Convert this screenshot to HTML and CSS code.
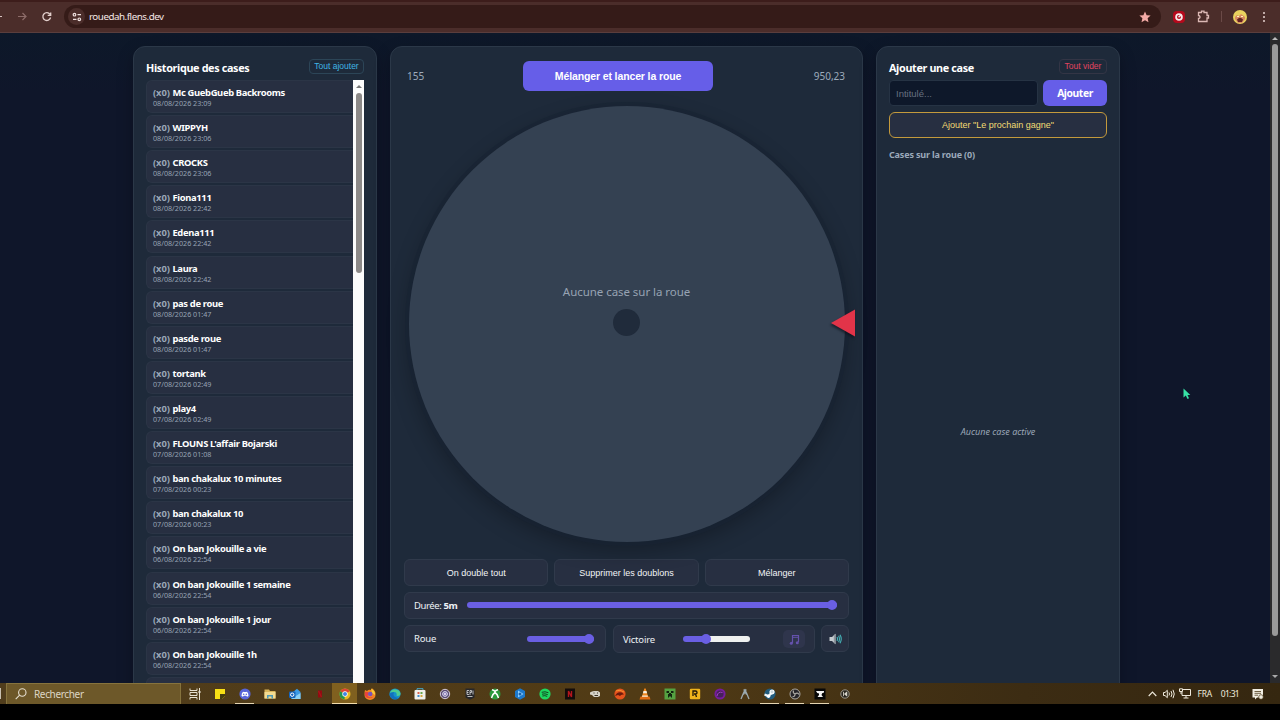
FILE: index.html
```html
<!DOCTYPE html>
<html lang="fr">
<head>
    <meta charset="UTF-8">
    <meta name="viewport" content="width=device-width, initial-scale=1.0">
    <title>Roue</title>
    <link rel="stylesheet" href="styles.css">
</head>
<body>
    <header class="browser-bar">
        <svg class="nav-icons" width="60" height="30" viewBox="0 0 60 30" fill="none" stroke-width="1.2">
            <path d="M-4 14.500H2" stroke="#d9c3c0"/>
            <path d="M18 14.500H26M22.500 11l3.500 3.500-3.500 3.500" stroke="#8d6c69"/>
            <path d="M50 12.300A3.900 3.900 0 1 0 50.600 15.500M50.700 10.500V13.300H47.700" stroke="#e3d0cd" stroke-width="1.300"/>
        </svg>
        <div class="address">
            <span class="site-info">
                <svg width="10" height="10" viewBox="0 0 10 10" fill="none" stroke="#f0e2e0" stroke-width="1.200"><circle cx="2.500" cy="2.700" r="1.300"/><path d="M5.500 2.700H9M1 7.300H4.500"/><circle cx="7.300" cy="7.300" r="1.300"/></svg>
            </span>
            <span class="url">rouedah.flens.dev</span>
            <svg class="star" width="12" height="12" viewBox="0 0 12 12"><path d="M6 .5l1.600 3.700 4 .4-3 2.700.9 4L6 9.200 2.500 11.300l.9-4-3-2.700 4-.4z" fill="#f3aaa6"/></svg>
        </div>
        <div class="browser-tools">
            <svg width="12" height="12" viewBox="0 0 12 12"><rect width="12" height="12" rx="4" fill="#b5091c"/><circle cx="6" cy="6" r="3.800" fill="#f6e9e9"/><circle cx="6" cy="6" r="2" fill="#b5091c"/><path d="M5.500 6.300L8 4" stroke="#f6e9e9" stroke-width="1.500"/></svg>
            <svg width="13" height="13" viewBox="0 0 13 13" fill="none" stroke="#dcb9b5" stroke-width="1.300"><path d="M1.500 2.500H4.500V1.200H7V2.500H10V5.500H11.500V8H10V11.500H1.500V8.500Q3 8.500 3 7T1.500 5.500z"/></svg>
            <span class="tools-divider"></span>
            <svg width="14" height="14" viewBox="0 0 14 14"><circle cx="7" cy="7" r="7" fill="#ead25e"/><path d="M2 7l2-2 2 1 2-2 4 3v2l-3 4H5L2 9z" fill="#d88a62"/><path d="M4 9.500Q7 6 10 9.500L9 12H5z" fill="#612322"/><path d="M4 6.500h2M8 6.500h2" stroke="#fff5bc" stroke-width="1.200"/></svg>
            <svg width="4" height="12" viewBox="0 0 4 12" fill="#e6d3d0"><circle cx="2" cy="2" r="1"/><circle cx="2" cy="6" r="1"/><circle cx="2" cy="10" r="1"/></svg>
        </div>
    </header>

    <div class="viewport">
        <main class="page">
            <section class="panel side history">
                <div class="panel-head">
                    <h2>Historique des cases</h2>
                    <button class="btn-small blue">Tout ajouter</button>
                </div>
                <div class="history-box">
                    <ul class="history-list">
                        <li><p><span>(x0)</span> Mc GuebGueb Backrooms</p><small>08/08/2026 23:09</small></li>
                        <li><p><span>(x0)</span> WIPPYH</p><small>08/08/2026 23:06</small></li>
                        <li><p><span>(x0)</span> CROCKS</p><small>08/08/2026 23:06</small></li>
                        <li><p><span>(x0)</span> Fiona111</p><small>08/08/2026 22:42</small></li>
                        <li><p><span>(x0)</span> Edena111</p><small>08/08/2026 22:42</small></li>
                        <li><p><span>(x0)</span> Laura</p><small>08/08/2026 22:42</small></li>
                        <li><p><span>(x0)</span> pas de roue</p><small>08/08/2026 01:47</small></li>
                        <li><p><span>(x0)</span> pasde roue</p><small>08/08/2026 01:47</small></li>
                        <li><p><span>(x0)</span> tortank</p><small>07/08/2026 02:49</small></li>
                        <li><p><span>(x0)</span> play4</p><small>07/08/2026 02:49</small></li>
                        <li><p><span>(x0)</span> FLOUNS L'affair Bojarski</p><small>07/08/2026 01:08</small></li>
                        <li><p><span>(x0)</span> ban chakalux 10 minutes</p><small>07/08/2026 00:23</small></li>
                        <li><p><span>(x0)</span> ban chakalux 10</p><small>07/08/2026 00:23</small></li>
                        <li><p><span>(x0)</span> On ban Jokouille a vie</p><small>06/08/2026 22:54</small></li>
                        <li><p><span>(x0)</span> On ban Jokouille 1 semaine</p><small>06/08/2026 22:54</small></li>
                        <li><p><span>(x0)</span> On ban Jokouille 1 jour</p><small>06/08/2026 22:54</small></li>
                        <li><p><span>(x0)</span> On ban Jokouille 1h</p><small>06/08/2026 22:54</small></li>
                        <li></li>
                    </ul>
                    <div class="list-scroll">
                        <i class="arrow-up"></i>
                        <i class="thumb"></i>
                    </div>
                </div>
            </section>

            <section class="panel center">
                <div class="wheel-head">
                    <span>155</span>
                    <button class="btn-primary launch">Mélanger et lancer la roue</button>
                    <span class="right">950,23</span>
                </div>
                <div class="wheel">
                    <span class="wheel-text">Aucune case sur la roue</span>
                    <span class="hub"></span>
                    <svg class="pointer" width="24" height="28" viewBox="0 0 24 28"><path d="M0 14L24 .5V27.500z" fill="#e23449"/></svg>
                </div>
                <div class="row actions">
                    <button class="btn-dark">On double tout</button>
                    <button class="btn-dark">Supprimer les doublons</button>
                    <button class="btn-dark">Mélanger</button>
                </div>
                <div class="row">
                    <div class="control duration">
                        <label>Durée: <b>5m</b></label>
                        <span class="slider full"><i></i></span>
                    </div>
                </div>
                <div class="row sounds">
                    <div class="control volume">
                        <label>Roue</label>
                        <span class="slider full"><i></i></span>
                    </div>
                    <div class="control victory">
                        <label>Victoire</label>
                        <span class="slider third"><i></i></span>
                        <span class="music">
                            <svg width="11" height="11" viewBox="0 0 11 11"><path d="M3.500 9V1.500H9.500V8" fill="none" stroke="#6552ad" stroke-width="1.200"/><path d="M3.500 3.300H9.500" stroke="#6552ad"/><circle cx="2.300" cy="9.200" r="1.500" fill="#6552ad"/><circle cx="8.300" cy="8.800" r="1.500" fill="#6552ad"/></svg>
                        </span>
                    </div>
                    <div class="control mute">
                        <svg width="13" height="12" viewBox="0 0 13 12"><path d="M.5 4H3L6.500 .8V11.200L3 8H.5z" fill="#c5cbd0"/><path d="M4.800 2.500L6.500 .8V11.200L4.800 9.600z" fill="#8d959c"/><path d="M8 4Q9 6 8 8M9.600 2.800Q11.300 6 9.600 9.200M11 1.800Q13.500 6 11 10.200" fill="none" stroke="#45b4b9" stroke-width="1.100"/></svg>
                    </div>
                </div>
            </section>

            <section class="panel side add">
                <div class="panel-head">
                    <h2>Ajouter une case</h2>
                    <button class="btn-small red">Tout vider</button>
                </div>
                <div class="add-row">
                    <input type="text" placeholder="Intitulé...">
                    <button class="btn-primary">Ajouter</button>
                </div>
                <button class="btn-gold">Ajouter "Le prochain gagne"</button>
                <h3>Cases sur la roue (0)</h3>
                <p class="empty">Aucune case active</p>
            </section>
        </main>
        <div class="page-scroll">
            <i class="arrow-up"></i>
            <i class="thumb"></i>
            <i class="arrow-down"></i>
        </div>
        <svg class="cursor" width="8" height="12" viewBox="0 0 8 12"><path d="M.5 .5V9.500L2.800 7.500 4.500 11 6 10.300 4.500 7H7.300z" fill="#37e2a5"/></svg>
    </div>

    <footer class="taskbar">
        <span class="start"></span>
        <div class="search">
            <svg width="12" height="12" viewBox="0 0 12 12" fill="none" stroke="#e6dfd0" stroke-width="1.100"><circle cx="7.300" cy="4.500" r="3.700"/><path d="M4.600 7.200L.7 11.200"/></svg>
            <span>Rechercher</span>
        </div>
        <div class="apps">
            <span><svg viewBox="0 0 12 12" fill="none" stroke="#e6e0d0"><path d="M1 .5V2.500H8V.5M1 11.500V9.500H8V11.500M1 4.500H8V7.500H1zM10.500 0V12"/><path d="M9.500 4h2" stroke-width="2"/></svg></span>
            <span><svg viewBox="0 0 12 12"><path d="M1 1H11V8L8 11H1z" fill="#f7df15"/><path d="M6 6H11V8L8 11H6z" fill="#443b10"/></svg></span>
            <span class="running"><svg viewBox="0 0 12 12"><circle cx="6" cy="6" r="5.600" fill="#5865d8"/><path d="M2.500 8Q2.500 5 4 3.700L5 4H7L8 3.700Q9.500 5 9.500 8L8 8.700 7.300 7.800H4.700L4 8.700z" fill="#fff"/><circle cx="4.700" cy="6.300" r=".8" fill="#5865d8"/><circle cx="7.300" cy="6.300" r=".8" fill="#5865d8"/></svg></span>
            <span><svg viewBox="0 0 12 12"><path d="M.5 1.500H5L6 3H11.500V10.500H.5z" fill="#d9b65c"/><path d="M.5 4H11.500V10.500H.5z" fill="#f4dc91"/><path d="M3 7H9V10.500H7.500V8.500H4.500V10.500H3z" fill="#4f9ab7"/></svg></span>
            <span><svg viewBox="0 0 12 12"><path d="M4 4L8 .8 11.500 4V11H2z" fill="#3c9be5"/><path d="M3 10.500L11.500 5V11H3z" fill="#8bd1f5"/><rect y="3.500" width="6.500" height="6.500" rx="1" fill="#1565bd"/><circle cx="3.200" cy="6.700" r="1.700" fill="none" stroke="#fff"/></svg></span>
            <span><svg viewBox="0 0 12 12"><path d="M4 2.500H8V9.500H4z" fill="#930b12"/><path d="M4.500 3L7.500 9" stroke="#a8141a" stroke-width="1.300"/></svg></span>
            <span class="active"><svg viewBox="0 0 12 12"><circle cx="6" cy="6" r="5.500" fill="#e8b923"/><path d="M6 6L1.200 3.200A5.500 5.500 0 0 1 10.800 3.200z" fill="#dc4437"/><path d="M6 6L1.200 3.200A5.500 5.500 0 0 0 5.500 11.500z" fill="#24954d"/><circle cx="6" cy="6" r="2.700" fill="#fff"/><circle cx="6" cy="6" r="2" fill="#4285e5"/></svg></span>
            <span><svg viewBox="0 0 12 12"><path d="M1 2L3 3Q5 1 7 2L8 .3Q12 3 11.500 7A5.500 5 0 0 1 .5 7Q.3 4 1 2z" fill="#f48622"/><path d="M7 .5Q11.500 3 11 7L8 5z" fill="#f7cb35"/><path d="M1 4Q3 3 5 5L3.500 8Q7 11 10 7.500A5 4.500 0 0 1 1 8z" fill="#e7433f"/><circle cx="6.200" cy="6" r="2.300" fill="#7954b8"/></svg></span>
            <span><svg viewBox="0 0 12 12"><circle cx="6" cy="6" r="5.600" fill="#1690ca"/><path d="M1 5A5.500 5.500 0 0 1 11.600 6Q11 8.500 7.500 7.800 8.500 4 5 4 2 4 1 5z" fill="#4dcb92"/><path d="M4.500 6Q4 9.500 9.500 10A5.600 5.600 0 0 1 .5 6Q2 4 5 4.300z" fill="#126fbd"/></svg></span>
            <span><svg viewBox="0 0 12 12"><path d="M3 2V.7H9V2" fill="none" stroke="#4ba9cc"/><rect x=".5" y="2" width="11" height="9.500" rx="1" fill="#f0f0eb"/><path d="M3.500 4H5.500V6H3.500z" fill="#d9624e"/><path d="M6.500 4H8.500V6H6.500z" fill="#68a74e"/><path d="M3.500 7H5.500V9H3.500z" fill="#3c8bd0"/><path d="M6.500 7H8.500V9H6.500z" fill="#d6a83e"/></svg></span>
            <span><svg viewBox="0 0 12 12"><circle cx="6" cy="6" r="4.700" fill="#5c4a73" stroke="#d2cbd8"/><circle cx="6" cy="6" r="2.400" fill="#7e63aa" stroke="#d7e3ed"/><circle cx="6" cy="6" r=".9" fill="#fff"/></svg></span>
            <span><svg viewBox="0 0 12 12"><path d="M1.500 .5H10.500V9.500L6 11.700 1.500 9.500z" fill="#27272a"/><path d="M5 2.500H3V6.500H5M3 4.500H4.500M6 7V2.500H7.500V4.500H6M9 2.500V6.500M3.500 8.500H8.500" fill="none" stroke="#ddd" stroke-width=".8"/></svg></span>
            <span><svg viewBox="0 0 12 12"><circle cx="6" cy="6" r="5.500" fill="#2b9a3e"/><path d="M2.500 10Q3.500 6 6 4.500 8.500 6 9.500 10M3 1.800Q5 2 6 3.500 7 2 9 1.800" fill="none" stroke="#fff" stroke-width="1.500"/></svg></span>
            <span><svg viewBox="0 0 12 12"><path d="M6 .3L11 3V9L6 11.700 1 9V3z" fill="#1c78cc"/><path d="M4 2.500L9.500 6 4 9.500z" fill="#8ed0ff"/><circle cx="6" cy="6" r="1.500" fill="#1961ad"/></svg></span>
            <span><svg viewBox="0 0 12 12"><circle cx="6" cy="6" r="5.600" fill="#1ed760"/><path d="M2.700 4.300Q6 3.100 9.400 4.700M3 6.200Q6 5.200 8.800 6.700M3.400 8Q6 7.100 8.200 8.400" fill="none" stroke="#134520"/></svg></span>
            <span><svg viewBox="0 0 12 12"><path d="M1 .5H11V11.500H1z" fill="#130c0b"/><path d="M4.500 9V3L7.500 9V3" fill="none" stroke="#b4141c" stroke-width="1.400"/></svg></span>
            <span><svg viewBox="0 0 12 12"><path d="M1 4.500L3 3.500 5 3H9L11 4.500V8L9 9H5L3 7 1 6.500z" fill="#d6d2c6"/><path d="M4.500 5H5.500M8 5H9M5.500 7.500H9" stroke="#3b3326"/></svg></span>
            <span><svg viewBox="0 0 12 12"><circle cx="6" cy="6" r="5.600" fill="#e5531d"/><path d="M1 8Q3 3 8 4.500L10 6.500Q7 6 6 8L4 7z" fill="#6b1b0d"/><path d="M2 3Q6 1 10 4" fill="none" stroke="#f39332"/></svg></span>
            <span><svg viewBox="0 0 12 12"><path d="M5.300 .5H6.700L9.200 9H2.800z" fill="#ef861c"/><path d="M4.500 3H7.500L8.100 5.200H3.900z" fill="#f3eee1"/><path d="M1.500 8.500H10.500L11.500 11.500H.5z" fill="#e06c13"/><path d="M3.200 7.500H8.800V8.800H3z" fill="#f3eee1"/></svg></span>
            <span><svg viewBox="0 0 12 12"><path d="M.5 .5H11.500V11.500H.5z" fill="#55a242"/><path d="M2.500 3H5V5H2.500zM7 3H9.500V5H7zM5 5H7V6H8V9.500H7V8.500H5V9.500H4V6H5z" fill="#12240f"/></svg></span>
            <span><svg viewBox="0 0 12 12"><rect x=".8" y=".8" width="10.400" height="10.400" rx="1.200" fill="#f0b51c"/><path d="M4 8V3H6.500Q8 3 8 4.500T6.500 6H5M6.500 6L7.500 9" fill="none" stroke="#211807" stroke-width="1.300"/></svg></span>
            <span><svg viewBox="0 0 12 12"><circle cx="6" cy="6" r="4.600" fill="#45205b" stroke="#761d9c" stroke-width="2"/><path d="M3 8Q4 3 8.500 4.500" fill="none" stroke="#a23cc2"/></svg></span>
            <span><svg viewBox="0 0 12 12" fill="none" stroke="#9ba9ae" stroke-width="1.300"><path d="M2 11L4.500 5 6 2 7.500 5 10 11M4.500 2H7.500M4.500 6.500L6 4 7.500 6.500"/></svg></span>
            <span class="running"><svg viewBox="0 0 12 12"><circle cx="6" cy="6" r="5.600" fill="#215b7d"/><path d="M.5 6.500L4.500 8 8 4.500" stroke="#eef3f5" stroke-width="2.400" fill="none"/><circle cx="8" cy="4" r="2" fill="#c9d7de" stroke="#fff" stroke-width="1.200"/><circle cx="4.500" cy="8.300" r="1.700" fill="#fff"/></svg></span>
            <span class="running"><svg viewBox="0 0 12 12"><circle cx="6" cy="6" r="5" fill="#26252a" stroke="#aaa7a2"/><path d="M6 6Q3.500 5 4.500 2.500M6 6Q8.500 4 10 6.500M6 6Q6 9 3.500 8.700" fill="none" stroke="#aaa7a2" stroke-width="1.200"/></svg></span>
            <span class="running"><svg viewBox="0 0 12 12"><path d="M.5 .5H11.500V11.500H.5z" fill="#070707"/><path d="M2 3H10V4.500Q7.500 4.800 7.500 7L9 9H3.500L5 7V5.500Q3 5.500 2 3z" fill="#f3f3f3"/></svg></span>
            <span><svg viewBox="0 0 12 12"><circle cx="6" cy="6" r="4.200" fill="#28251e" stroke="#9d998e"/><path d="M4.500 3.800V8.200M7.800 4L5.500 6 7.800 8z" fill="#e5e2d7" stroke="#e5e2d7" stroke-width=".8"/></svg></span>
        </div>
        <div class="tray">
            <svg width="9" height="6" viewBox="0 0 9 6" fill="none" stroke="#eee9dc" stroke-width="1.100"><path d="M.7 5L4.500 1 8.300 5"/></svg>
            <svg class="sound" width="12" height="10" viewBox="0 0 12 10" fill="none" stroke="#eee9dc"><path d="M.5 3.500H2L4.300 1.300V8.700L2 6.500H.5zM6 3.500Q7 5 6 6.500M8 2Q10 5 8 8M10 .8Q12.500 5 10 9.200"/></svg>
            <svg class="net" width="12" height="11" viewBox="0 0 12 11" fill="none" stroke="#eee9dc"><path d="M4 1.500H11.500V7.500H3V4M7 7.500V10M4.500 10H9.500M.5 .8H3.500V3.500H.5zM2 3.500V6"/></svg>
            <span class="lang">FRA</span>
            <span class="clock">01:31</span>
            <svg class="notif" width="12" height="12" viewBox="0 0 12 12"><path d="M.5 1H11V9.500H5L3 11.500V9.500H.5z" fill="#f2eee3"/><path d="M2.500 3.500H9M2.500 5.300H9M2.500 7.200H6" stroke="#4b3a19" stroke-width=".8"/><circle cx="9" cy="9" r="2.300" fill="#f2eee3" stroke="#4b3a19" stroke-width=".7"/></svg>
        </div>
    </footer>
</body>
</html>
```

FILE: styles.css
```css
* {
    box-sizing: border-box;
}
body {
    margin: 0;
    width: 1280px;
    height: 720px;
    overflow: hidden;
    background: #000;
    color: #fff;
    font-family: "Noto Sans", "Open Sans", sans-serif;
    font-size: 10px;
}
h2, h3, p, ul {
    margin: 0;
    padding: 0;
}
button {
    padding: 0;
    font-family: "Liberation Sans", Arial, sans-serif;
}
svg {
    display: block;
    flex: none;
}

/* Navigateur */
.browser-bar {
    display: flex;
    align-items: center;
    height: 33px;
    padding-bottom: 1px;
    background: #4b2d2a;
    border-top: 2px solid #3d1d1b;
    border-bottom: 1px solid #5a3e3d;
}
.nav-icons {
    margin-right: 4px;
}
.address {
    display: flex;
    align-items: center;
    width: 1097px;
    height: 23px;
    padding: 0 10px 0 4px;
    border-radius: 12px;
    background: #351b18;
}
.site-info {
    display: flex;
    align-items: center;
    justify-content: center;
    width: 17px;
    height: 17px;
    border-radius: 50%;
    background: #4b2d2a;
}
.url {
    margin-left: 4px;
    font-size: 9.8px;
    letter-spacing: -0.48px;
    color: #f4e7e5;
}
.star {
    margin-left: auto;
}
.browser-tools {
    display: flex;
    align-items: center;
    margin-left: 12px;
}
.browser-tools svg:nth-child(2) {
    margin-left: 12px;
}
.tools-divider {
    width: 1px;
    height: 11px;
    margin: 0 11px;
    background: #6b4a47;
}
.browser-tools svg:last-child {
    margin-left: 15px;
}

/* Page */
.viewport {
    position: relative;
    display: flex;
    height: 650px;
    overflow: hidden;
    background: linear-gradient(#0d1829, #0f162a 60px, #0f162a);
}
.page {
    display: flex;
    flex: 1;
    gap: 13px;
    padding: 13px 0 0 133px;
}
.panel {
    height: 700px;
    padding: 12px;
    border: 1px solid #2b3848;
    border-radius: 12px;
    background: #1e2a3a;
    box-shadow: 0 6px 16px rgba(0, 0, 0, 0.25);
}
.side {
    width: 244px;
}
.center {
    width: 473px;
    padding: 13px;
}
.panel-head {
    display: flex;
    justify-content: space-between;
    height: 21px;
}
h2 {
    line-height: 17px;
    font-size: 10.8px;
    letter-spacing: -0.35px;
    white-space: nowrap;
}
.btn-small {
    width: 55px;
    height: 15px;
    border: 1px solid #2c4557;
    border-radius: 4px;
    background: transparent;
    font-size: 8.5px;
    line-height: 13px;
}
.blue {
    color: #40b5e5;
}
.red {
    width: 48px;
    border-color: #333545;
    color: #e14560;
}

/* Historique */
.history-box {
    display: flex;
    height: 640px;
}
.history-list {
    width: 207px;
    list-style: none;
}
.history-list li {
    height: 33px;
    margin-bottom: 2.12px;
    padding: 5px 6px;
    border: 1px solid #2b3546;
    border-right: 0;
    border-radius: 6px 0 0 6px;
    background: #272f41;
}
.history-list p {
    line-height: 13px;
    font-size: 9.4px;
    font-weight: 700;
    letter-spacing: -0.33px;
    white-space: nowrap;
}
.history-list p span {
    margin-right: 0.6px;
    letter-spacing: -0.1px;
    color: #9aa7b8;
}
.history-list small {
    display: block;
    font-size: 7.2px;
    line-height: 9px;
    color: #97a3b4;
}
.list-scroll {
    display: flex;
    flex-direction: column;
    align-items: center;
    width: 11px;
    background: #fcfcfc;
}
.arrow-up,
.arrow-down {
    border: 3px solid transparent;
}
.arrow-up {
    border-top: 0;
    border-bottom: 3px solid #777;
}
.arrow-down {
    border-bottom: 0;
    border-top: 3px solid #aaa;
}
.list-scroll .arrow-up {
    margin-top: 5px;
}
.list-scroll .thumb {
    width: 6px;
    height: 180px;
    margin-top: 5px;
    border-radius: 3px;
    background: #8c8988;
}

/* Roue */
.wheel-head {
    display: grid;
    grid-template-columns: 116px 190px 1fr;
    align-items: center;
    height: 31px;
    padding: 0 4px 0 3px;
    color: #9dabbc;
}
.wheel-head span {
    font-size: 10px;
}
.wheel-head .right {
    text-align: right;
}
.btn-primary {
    border: 0;
    border-radius: 6px;
    background: #665ee8;
    color: #fff;
    font-weight: 700;
}
.launch {
    width: 190px;
    height: 30px;
    font-size: 10.5px;
    letter-spacing: -0.12px;
}
.wheel {
    position: relative;
    width: 436px;
    height: 436px;
    margin: 14.5px auto 17.5px;
    border-radius: 50%;
    background: #344152;
    box-shadow: 0 0 0 4px rgba(24, 35, 51, 0.7), 0 8px 22px rgba(0, 0, 0, 0.3);
    text-align: center;
}
.wheel-text {
    display: block;
    padding-top: 177px;
    line-height: 17px;
    font-size: 11.5px;
    letter-spacing: -0.05px;
    color: #97a3b3;
}
.hub {
    display: block;
    width: 27px;
    height: 27px;
    margin: 9.5px auto 0;
    border-radius: 50%;
    background: #202b3b;
}
.pointer {
    position: absolute;
    left: 422px;
    top: 203.5px;
    filter: drop-shadow(-1px 2px 1px rgba(10, 15, 25, 0.6));
}
.row {
    display: flex;
    gap: 6px;
    margin-bottom: 6px;
}
.btn-dark {
    flex: 1;
    height: 27px;
    border: 1px solid #303a4b;
    border-radius: 6px;
    background: #272f41;
    color: #f3f5f8;
    font-size: 9px;
}
.control {
    display: flex;
    align-items: center;
    height: 27px;
    padding: 0 10px 0 9px;
    border: 1px solid #303a4b;
    border-radius: 6px;
    background: #272f41;
    font-size: 9.5px;
    letter-spacing: -0.2px;
    color: #edf1f5;
    white-space: nowrap;
}
.slider {
    position: relative;
    height: 6px;
    border-radius: 3px;
    background: #6a5fe3;
}
.slider i {
    position: absolute;
    right: 0;
    top: -2px;
    width: 10px;
    height: 10px;
    border-radius: 50%;
    background: #6a5fe3;
}
.duration {
    width: 445px;
    padding-right: 11px;
    padding-bottom: 1px;
    letter-spacing: -0.4px;
}
.duration .slider {
    width: 370px;
    margin-left: auto;
}
.volume {
    width: 202px;
    padding-right: 11px;
}
.volume .slider {
    width: 67px;
    margin-left: auto;
}
.sounds .victory {
    width: 202px;
    height: 28px;
    margin-left: 1px;
    padding-right: 9px;
}
.victory .slider {
    width: 67px;
    margin-left: auto;
}
.third {
    background: linear-gradient(90deg, #6a5fe3 23px, #eff1ef 23px);
}
.third i {
    left: 18px;
}
.music {
    display: flex;
    align-items: center;
    justify-content: center;
    width: 22px;
    height: 18px;
    margin-left: 33px;
    border-radius: 5px;
    background: #2f354c;
}
.mute {
    width: 28px;
    padding: 0;
    justify-content: center;
}

/* Ajout */
.add-row {
    display: flex;
    gap: 5px;
}
.add-row input {
    width: 149px;
    height: 26px;
    padding: 0 6px;
    border: 1px solid #263344;
    border-radius: 4px;
    background: #0e182a;
    font: 9.5px "Liberation Sans", Arial, sans-serif;
}
.add-row input::placeholder {
    color: #667180;
}
.add-row .btn-primary {
    width: 64px;
    height: 26px;
    font: 700 10.3px "Noto Sans", sans-serif;
    letter-spacing: -0.4px;
}
.btn-gold {
    display: block;
    width: 218px;
    height: 26px;
    margin-top: 6px;
    border: 1px solid #c49a3c;
    border-radius: 6px;
    background: #272f41;
    color: #f3dc74;
    font-size: 9px;
}
h3 {
    margin-top: 10px;
    line-height: 14px;
    font-size: 9px;
    letter-spacing: -0.17px;
    color: #9ba9bb;
}
.empty {
    margin-top: 263px;
    text-align: center;
    font-size: 9px;
    font-style: italic;
    color: #9aa6b6;
}
.page-scroll {
    display: flex;
    flex-direction: column;
    align-items: center;
    width: 10px;
    background: #2a2a2c;
}
.page-scroll .arrow-up {
    margin-top: 4px;
    border-bottom-color: #bbb;
}
.page-scroll .thumb {
    width: 6px;
    height: 592px;
    margin-top: 4px;
    border-radius: 3px;
    background: #999;
}
.page-scroll .arrow-down {
    margin-top: 39px;
}
.cursor {
    position: absolute;
    left: 1183px;
    top: 355px;
}

/* Barre des taches */
.taskbar {
    display: flex;
    height: 21px;
    background: linear-gradient(90deg, #503d1c, #513b15 50%, #3c2c13 80%, #352710);
}
.start {
    width: 1px;
    height: 11px;
    margin: 5px 5px 0 0;
    background: #c8c0b0;
}
.search {
    display: flex;
    align-items: center;
    gap: 7px;
    width: 175px;
    padding-left: 8px;
    border: 1px solid #86733d;
    border-bottom: 0;
    background: #6d5829;
    color: #ddd6c5;
    font-size: 10px;
    letter-spacing: -0.35px;
}
.apps {
    display: flex;
    margin-left: 1px;
}
.apps span {
    display: flex;
    align-items: center;
    justify-content: center;
    width: 25px;
    height: 21px;
}
.apps svg {
    width: 12px;
    height: 12px;
}
.apps .running {
    background: linear-gradient(#e5d5b2, #e5d5b2) center bottom / 19px 1px no-repeat;
}
.apps .active {
    background: linear-gradient(#f3ddad, #f3ddad) center bottom / 25px 1px no-repeat #80601f;
}
.tray {
    display: flex;
    align-items: center;
    margin-left: auto;
    padding-right: 16px;
    font-size: 8.5px;
    letter-spacing: -0.4px;
    color: #f0ecdf;
}
.tray .sound {
    margin-left: 6px;
}
.tray .net {
    margin-left: 4px;
}
.lang {
    margin-left: 7px;
    letter-spacing: -0.3px;
}
.clock {
    margin-left: 9px;
    letter-spacing: -0.7px;
}
.notif {
    margin-left: 13px;
}
```
